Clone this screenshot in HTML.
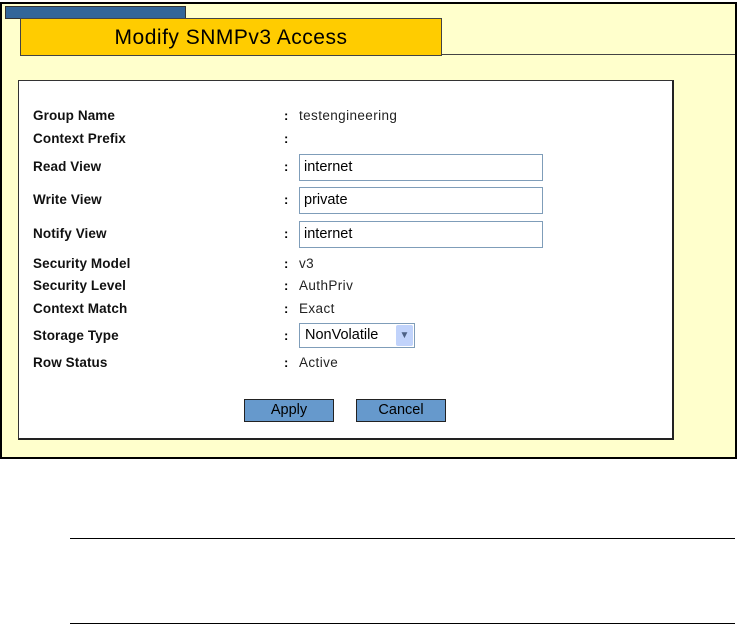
<!DOCTYPE html>
<html><head><style>
body{margin:0;width:737px;height:624px;background:#fff;position:relative;font-family:"Liberation Sans",Tahoma,sans-serif;overflow:hidden}
.a{position:absolute}
.frame{left:0;top:2px;width:733px;height:453px;border:2px solid #000;background:#ffffcc}
.tab{left:5px;top:6px;width:179px;height:11px;background:#336699;border:1px solid #333}
.hdr{left:20px;top:18px;width:420px;height:36px;background:#ffcc00;border:1px solid #444;font-size:21px;letter-spacing:0.5px;text-align:center;line-height:38px;color:#000}
.hl{left:441px;top:54px;width:294px;height:1px;background:#444}
.panel{left:18px;top:80px;width:653px;height:357px;background:#fff;border:1px solid #333;border-right:2px solid #222;border-bottom:2px solid #222}
.l{left:33px;font-size:13.5px;font-weight:bold;color:#111;letter-spacing:0.1px}
.c{left:284px;font-size:13px;font-weight:bold}
.v{left:299px;font-size:13.5px;letter-spacing:0.4px;color:#222}
.in{left:299px;border:1px solid #7f9db9;background:#fff;font-size:14.5px;line-height:25px;padding-left:4px;box-sizing:border-box;width:244px;height:27px}
.btn{height:21px;width:88px;background:#6699cc;border:1px solid #222;font-size:14.5px;text-align:center;line-height:21px;color:#000}
.rule{left:70px;width:665px;height:1px;background:#000}
</style></head><body>
<div class="a frame"></div>
<div class="a tab"></div>
<div class="a hdr">Modify SNMPv3 Access</div>
<div class="a hl"></div>
<div class="a panel"></div>
<div class="a l" style="top:108px">Group Name</div><div class="a c" style="top:108px">:</div><div class="a v" style="top:108px">testengineering</div>
<div class="a l" style="top:131px">Context Prefix</div><div class="a c" style="top:131px">:</div>
<div class="a l" style="top:159px">Read View</div><div class="a c" style="top:159px">:</div><div class="a in" style="top:154px">internet</div>
<div class="a l" style="top:192px">Write View</div><div class="a c" style="top:192px">:</div><div class="a in" style="top:187px">private</div>
<div class="a l" style="top:226px">Notify View</div><div class="a c" style="top:226px">:</div><div class="a in" style="top:221px">internet</div>
<div class="a l" style="top:256px">Security Model</div><div class="a c" style="top:256px">:</div><div class="a v" style="top:256px">v3</div>
<div class="a l" style="top:278px">Security Level</div><div class="a c" style="top:278px">:</div><div class="a v" style="top:278px">AuthPriv</div>
<div class="a l" style="top:301px">Context Match</div><div class="a c" style="top:301px">:</div><div class="a v" style="top:301px">Exact</div>
<div class="a l" style="top:328px">Storage Type</div><div class="a c" style="top:328px">:</div>
<div class="a" style="left:299px;top:323px;width:116px;height:25px;border:1px solid #7f9db9;box-sizing:border-box;background:#fff;font-size:14.5px;line-height:23px;padding-left:5px">NonVolatile
<div class="a" style="right:1px;top:1px;width:17px;height:21px;background:#c1d3fb;border-radius:2px;color:#4d6185;font-size:10px;text-align:center;line-height:21px">&#9660;</div></div>
<div class="a l" style="top:355px">Row Status</div><div class="a c" style="top:355px">:</div><div class="a v" style="top:355px">Active</div>
<div class="a btn" style="left:244px;top:399px">Apply</div>
<div class="a btn" style="left:356px;top:399px">Cancel</div>
<div class="a rule" style="top:538px"></div>
<div class="a rule" style="top:623px"></div>
</body></html>
